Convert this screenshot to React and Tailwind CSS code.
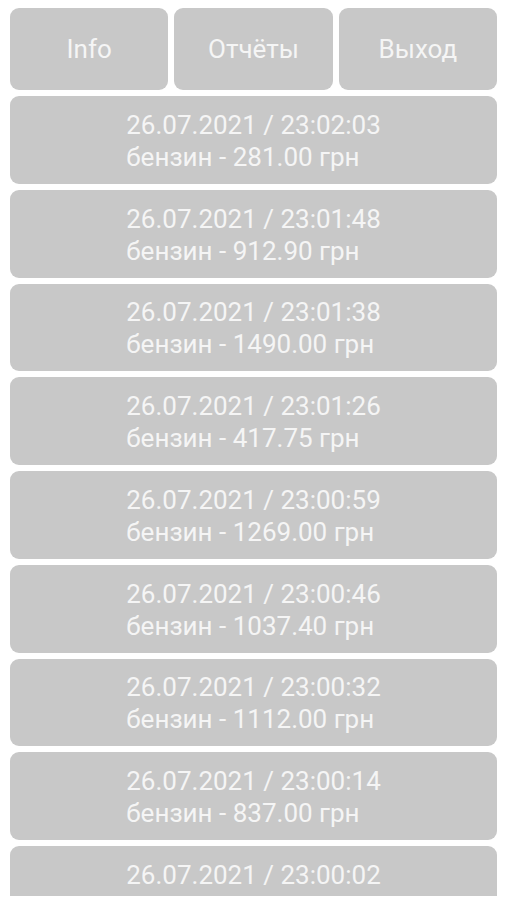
export default function App() {
  const rows = [
    ["23:02:03", "281.00"],
    ["23:01:48", "912.90"],
    ["23:01:38", "1490.00"],
    ["23:01:26", "417.75"],
    ["23:00:59", "1269.00"],
    ["23:00:46", "1037.40"],
    ["23:00:32", "1112.00"],
    ["23:00:14", "837.00"],
    ["23:00:02", "1200.00"],
  ];
  return (
    <div className="w-[506px] h-[896px] overflow-hidden bg-white" style={{ fontFamily: "Roboto, 'Noto Sans', sans-serif" }}>
      <div className="flex flex-col gap-[6px] pl-[10px] pr-[9px] pt-[8px]">
        <div className="grid grid-cols-3 gap-[6px]">
          {["Info", "Отчёты", "Выход"].map((t) => (
            <div key={t} className="h-[82px] rounded-[9px] bg-[#c8c8c8] text-[#f5f5f5] text-[26px] flex items-center justify-center">
              {t}
            </div>
          ))}
        </div>
        {rows.map(([time, sum]) => (
          <div key={time} className="h-[87.75px] shrink-0 rounded-[9px] bg-[#c8c8c8] text-[#f5f5f5] text-[26px] leading-[32px] pt-[2px] flex items-center justify-center">
            <div className="text-left">
              <div>26.07.2021 / {time}</div>
              <div>бензин - {sum} грн</div>
            </div>
          </div>
        ))}
      </div>
    </div>
  );
}
